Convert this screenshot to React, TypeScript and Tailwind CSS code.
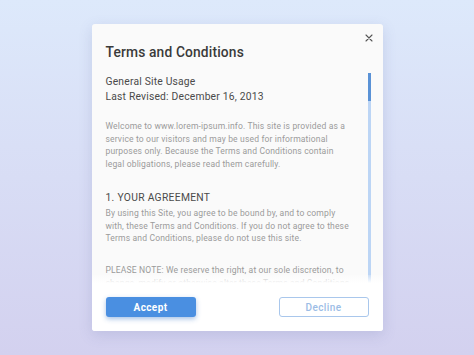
import React from "react";

const body = "text-[8.55px] leading-[12.7px] text-[#9b9b9b] tracking-[0.15px] whitespace-nowrap";

export default function App() {
  return (
    <div
      className="h-[355px] w-full flex items-center justify-center bg-linear-to-b from-[#dde9fb] to-[#d3d1ef]"
      style={{ fontFamily: "Roboto, 'Noto Sans', sans-serif" }}
    >
      <div className="relative w-[291px] h-[307px] rounded-[3px] bg-[#fafafa] shadow-[0_4px_14px_rgba(90,100,160,0.18)] flex flex-col overflow-hidden">
        <button className="absolute left-[273px] top-[10px] w-[8px] h-[8px] text-[#555]">
          <svg viewBox="0 0 8 8" width="8" height="8" stroke="currentColor" strokeWidth="1.1" strokeLinecap="round">
            <path d="M1 1L7 7M7 1L1 7" />
          </svg>
        </button>
        <div className="pl-[14px] pt-[18px] h-[42px]">
          <div className="text-[13.8px] leading-[20px] font-medium text-[#3a3a3a] tracking-[0.15px]">
            Terms and Conditions
          </div>
        </div>
        <div className="relative flex-1 overflow-hidden pl-[14px]">
          <div className="absolute left-[276px] top-[7px] bottom-0 w-[3px] bg-[#bcd5f5]">
            <div className="h-[28px] bg-[#5a92d6]" />
          </div>
          <div className="pt-[8px] text-[10.3px] leading-[15px] text-[#4a4a4a] tracking-[0.2px]">
            <div>General Site Usage</div>
            <div>Last Revised: December 16, 2013</div>
          </div>
          <div className="mt-[16px]">
            <div className={body}>Welcome to www.lorem-ipsum.info. This site is provided as a</div>
            <div className={body}>service to our visitors and may be used for informational</div>
            <div className={body}>purposes only. Because the Terms and Conditions contain</div>
            <div className={body}>legal obligations, please read them carefully.</div>
          </div>
          <div className="mt-[19px] text-[10.3px] leading-[16px] text-[#4a4a4a] tracking-[0.3px]">
            1. YOUR AGREEMENT
          </div>
          <div className="mt-[1px]">
            <div className={body}>By using this Site, you agree to be bound by, and to comply</div>
            <div className={body}>with, these Terms and Conditions. If you do not agree to these</div>
            <div className={body}>Terms and Conditions, please do not use this site.</div>
          </div>
          <div className="mt-[19px]">
            <div className={body}>PLEASE NOTE: We reserve the right, at our sole discretion, to</div>
            <div className={body}>change, modify or otherwise alter these Terms and Conditions</div>
          </div>
          <div className="absolute left-0 right-0 bottom-0 h-[8px] bg-linear-to-b from-[rgba(255,255,255,0.2)] to-white" />
        </div>
        <div className="h-[48px] bg-white flex items-center justify-between pl-[14px] pr-[14px]">
          <button className="w-[90px] h-[20px] rounded-[3px] bg-[#4a8fe1] text-white text-[10px] font-bold tracking-[0.4px] shadow-[0_2px_5px_rgba(60,120,200,0.45)]">
            Accept
          </button>
          <button className="w-[90px] h-[20px] rounded-[3px] border border-[#a9c7ec] text-[#9cbde6] text-[10px] font-medium tracking-[0.4px] bg-white">
            Decline
          </button>
        </div>
      </div>
    </div>
  );
}
